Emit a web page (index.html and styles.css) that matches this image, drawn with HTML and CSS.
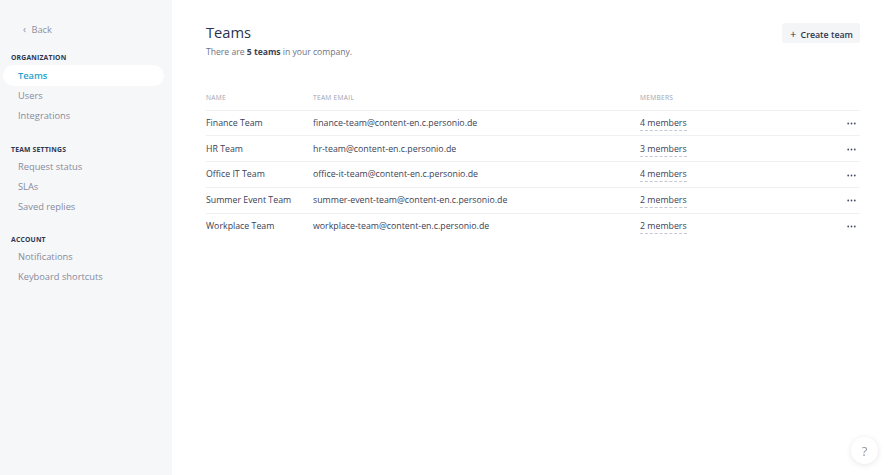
FILE: index.html
```html
<!DOCTYPE html>
<html lang="en">
<head>
    <meta charset="UTF-8">
    <meta name="viewport" content="width=device-width, initial-scale=1.0">
    <title>Teams</title>
    <link rel="stylesheet" href="styles.css">
</head>
<body>
    <div class="layout">
        <aside class="sidebar">
            <a class="back" href="#"><span class="chev">&#8249;</span> Back</a>

            <div class="nav-group">
                <div class="group-title">Organization</div>
                <a class="nav-item active" href="#">Teams</a>
                <a class="nav-item" href="#">Users</a>
                <a class="nav-item" href="#">Integrations</a>
            </div>

            <div class="nav-group">
                <div class="group-title">Team settings</div>
                <a class="nav-item" href="#">Request status</a>
                <a class="nav-item" href="#">SLAs</a>
                <a class="nav-item" href="#">Saved replies</a>
            </div>

            <div class="nav-group">
                <div class="group-title">Account</div>
                <a class="nav-item" href="#">Notifications</a>
                <a class="nav-item" href="#">Keyboard shortcuts</a>
            </div>
        </aside>

        <main class="content">
            <div class="page-head">
                <div>
                    <h1>Teams</h1>
                    <p class="subtitle">There are <b>5 teams</b> in your company.</p>
                </div>
                <button class="btn create-btn"><span class="plus">+</span> Create team</button>
            </div>

            <table>
                <thead>
                    <tr>
                        <th class="col-name">Name</th>
                        <th class="col-email">Team email</th>
                        <th class="col-members">Members</th>
                        <th class="col-actions"></th>
                    </tr>
                </thead>
                <tbody id="team-table">
                    <tr>
                        <td>Finance Team</td>
                        <td>finance-team@content-en.c.personio.de</td>
                        <td><span class="members">4 members</span></td>
                        <td class="dots"><svg width="9" height="3" viewBox="0 0 9 3"><circle cx="1.2" cy="1.5" r="0.9"/><circle cx="4.5" cy="1.5" r="0.9"/><circle cx="7.8" cy="1.5" r="0.9"/></svg></td>
                    </tr>
                    <tr>
                        <td>HR Team</td>
                        <td>hr-team@content-en.c.personio.de</td>
                        <td><span class="members">3 members</span></td>
                        <td class="dots"><svg width="9" height="3" viewBox="0 0 9 3"><circle cx="1.2" cy="1.5" r="0.9"/><circle cx="4.5" cy="1.5" r="0.9"/><circle cx="7.8" cy="1.5" r="0.9"/></svg></td>
                    </tr>
                    <tr>
                        <td>Office IT Team</td>
                        <td>office-it-team@content-en.c.personio.de</td>
                        <td><span class="members">4 members</span></td>
                        <td class="dots"><svg width="9" height="3" viewBox="0 0 9 3"><circle cx="1.2" cy="1.5" r="0.9"/><circle cx="4.5" cy="1.5" r="0.9"/><circle cx="7.8" cy="1.5" r="0.9"/></svg></td>
                    </tr>
                    <tr>
                        <td>Summer Event Team</td>
                        <td>summer-event-team@content-en.c.personio.de</td>
                        <td><span class="members">2 members</span></td>
                        <td class="dots"><svg width="9" height="3" viewBox="0 0 9 3"><circle cx="1.2" cy="1.5" r="0.9"/><circle cx="4.5" cy="1.5" r="0.9"/><circle cx="7.8" cy="1.5" r="0.9"/></svg></td>
                    </tr>
                    <tr>
                        <td>Workplace Team</td>
                        <td>workplace-team@content-en.c.personio.de</td>
                        <td><span class="members">2 members</span></td>
                        <td class="dots"><svg width="9" height="3" viewBox="0 0 9 3"><circle cx="1.2" cy="1.5" r="0.9"/><circle cx="4.5" cy="1.5" r="0.9"/><circle cx="7.8" cy="1.5" r="0.9"/></svg></td>
                    </tr>
                </tbody>
            </table>
        </main>
    </div>

    <button class="help-btn">?</button>
</body>
</html>
```

FILE: styles.css
```css
* {
    box-sizing: border-box;
}
body {
    margin: 0;
    font-family: "Open Sans", "Noto Sans", sans-serif;
    color: #3b4256;
    background-color: #fff;
}
a {
    text-decoration: none;
}
.layout {
    display: flex;
    height: 475px;
}
.sidebar {
    width: 172px;
    flex-shrink: 0;
    background-color: #f6f7f9;
    padding: 22px 8px 0 3px;
}
.back {
    display: block;
    padding-left: 20px;
    font-size: 9.3px;
    line-height: 14px;
    color: #8c91a1;
    margin-bottom: 16px;
}
.back .chev {
    font-size: 10px;
    margin-right: 3px;
}
.nav-group {
    margin-bottom: 18.5px;
}
.group-title {
    padding-left: 8px;
    font-size: 6.8px;
    font-weight: 700;
    text-transform: uppercase;
    letter-spacing: 0.2px;
    color: #2f3650;
    line-height: 10px;
    margin-bottom: 2px;
}
.nav-item {
    display: block;
    height: 20px;
    line-height: 20px;
    padding-left: 15px;
    font-size: 9.3px;
    color: #868b9c;
    border-radius: 11px;
}
.nav-item.active {
    background-color: #fff;
    color: #1fa3cc;
    font-weight: 600;
    height: 21px;
    line-height: 21px;
}
.content {
    flex: 1;
    padding: 23px 30px 0 34px;
}
.page-head {
    display: flex;
    justify-content: space-between;
    align-items: flex-start;
    margin-bottom: 35px;
}
h1 {
    margin: 0;
    font-size: 14.7px;
    font-weight: 400;
    line-height: 18px;
    color: #2b3350;
}
.subtitle {
    margin: 5px 0 0;
    font-size: 8.6px;
    line-height: 12px;
    color: #6d7386;
}
.subtitle b {
    font-weight: 700;
    color: #3b4256;
}
.btn {
    border: none;
    cursor: pointer;
    font-family: inherit;
}
.create-btn {
    height: 20px;
    padding: 0 7px 0 8px;
    border-radius: 3px;
    background-color: #f4f5f7;
    font-size: 8.8px;
    font-weight: 600;
    color: #2f3650;
}
.create-btn .plus {
    font-weight: 400;
    font-size: 11px;
    margin-right: 2px;
}
table {
    width: 100%;
    border-collapse: collapse;
}
th, td {
    padding: 0;
    text-align: left;
}
th {
    font-size: 6.6px;
    font-weight: 400;
    text-transform: uppercase;
    letter-spacing: 0.3px;
    color: #9da2b0;
    height: 17px;
    line-height: 10px;
    vertical-align: top;
}
thead tr {
    border-bottom: 1px solid #eef0f3;
}
td {
    height: 25.75px;
    font-size: 8.8px;
    color: #3b4256;
    vertical-align: middle;
}
tbody tr {
    border-bottom: 1px solid #eef0f3;
}
tbody tr:last-child {
    border-bottom: none;
}
.col-name {
    width: 107px;
}
.col-email {
    width: 327px;
}
.members {
    border-bottom: 1px dashed #c4c8d2;
    padding-bottom: 1px;
}
.dots {
    text-align: right;
    padding-right: 4px;
}
.dots svg {
    fill: #4a5064;
    display: inline-block;
    vertical-align: middle;
}
.help-btn {
    position: fixed;
    right: 12px;
    bottom: 11px;
    width: 27px;
    height: 27px;
    border-radius: 50%;
    border: none;
    background-color: #fff;
    box-shadow: 0 1px 6px rgba(0, 0, 0, 0.1);
    font-family: inherit;
    font-size: 13px;
    color: #9499a8;
    cursor: pointer;
}
```
